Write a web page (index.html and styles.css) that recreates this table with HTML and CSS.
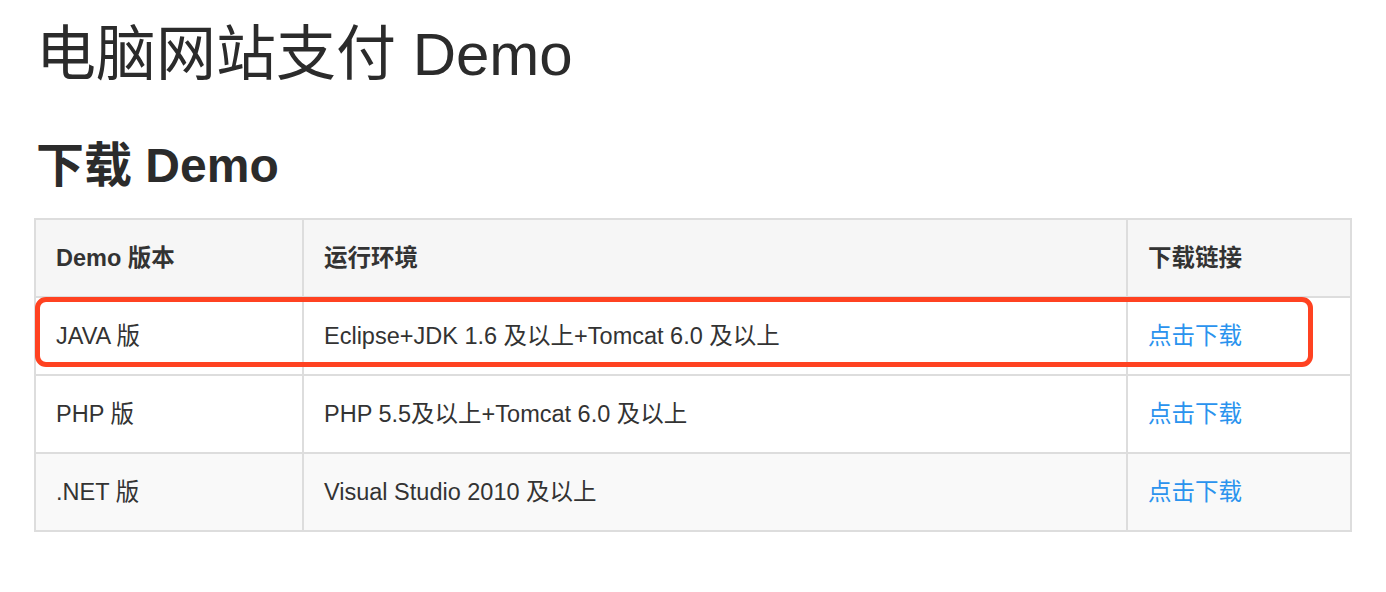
FILE: index.html
```html
<!DOCTYPE html>
<html lang="zh-CN">
<head>
<meta charset="utf-8">
<title>电脑网站支付 Demo</title>
<link rel="stylesheet" href="styles.css">
</head>
<body>
<main class="page">
  <h1 class="title">电脑网站支付 Demo</h1>
  <h2 class="subtitle">下载 Demo</h2>
  <div class="table-wrap">
    <table class="demo-table">
      <colgroup>
        <col class="c1">
        <col class="c2">
        <col class="c3">
      </colgroup>
      <thead>
        <tr>
          <th>Demo 版本</th>
          <th>运行环境</th>
          <th>下载链接</th>
        </tr>
      </thead>
      <tbody>
        <tr>
          <td>JAVA 版</td>
          <td>Eclipse+JDK 1.6 及以上+Tomcat 6.0 及以上</td>
          <td><a class="link" href="#">点击下载</a></td>
        </tr>
        <tr>
          <td>PHP 版</td>
          <td>PHP 5.5及以上+Tomcat 6.0 及以上</td>
          <td><a class="link" href="#">点击下载</a></td>
        </tr>
        <tr class="alt">
          <td>.NET 版</td>
          <td>Visual Studio 2010 及以上</td>
          <td><a class="link" href="#">点击下载</a></td>
        </tr>
      </tbody>
    </table>
    <div class="highlight"></div>
  </div>
</main>
</body>
</html>
```

FILE: styles.css
```css
html, body {
  margin: 0;
  padding: 0;
  background: #ffffff;
}

body {
  font-family: "Liberation Sans", "Noto Sans CJK SC", sans-serif;
  color: #333333;
}

.page {
  padding: 20px 34px 0 34px;
}

.title {
  margin: 0 0 48px 2px;
  font-size: 60px;
  line-height: 70px;
  font-weight: 400;
  color: #2b2b2b;
}

.subtitle {
  margin: 0 0 24px 2px;
  font-size: 48px;
  line-height: 56px;
  font-weight: 700;
  color: #2b2b2b;
}

.table-wrap {
  position: relative;
  width: 1316px;
}

.demo-table {
  width: 1316px;
  border-collapse: collapse;
  table-layout: fixed;
  border: 2px solid #dddddd;
}

.c1 { width: 268px; }
.c2 { width: 824px; }
.c3 { width: 224px; }

.demo-table th,
.demo-table td {
  border: 2px solid #dddddd;
  padding: 20px 20px;
  height: 36px;
  line-height: 36px;
  font-size: 23.5px;
  text-align: left;
  color: #333333;
  white-space: nowrap;
}

.demo-table th {
  background: #f6f6f6;
  font-weight: 700;
}

.demo-table tr.alt td {
  background: #f9f9f9;
}

.link {
  color: #2a93ee;
  text-decoration: none;
}

.highlight {
  position: absolute;
  left: 1px;
  top: 79px;
  width: 1268px;
  height: 60px;
  border: 5px solid #ff4221;
  border-radius: 11px;
  pointer-events: none;
}
```
